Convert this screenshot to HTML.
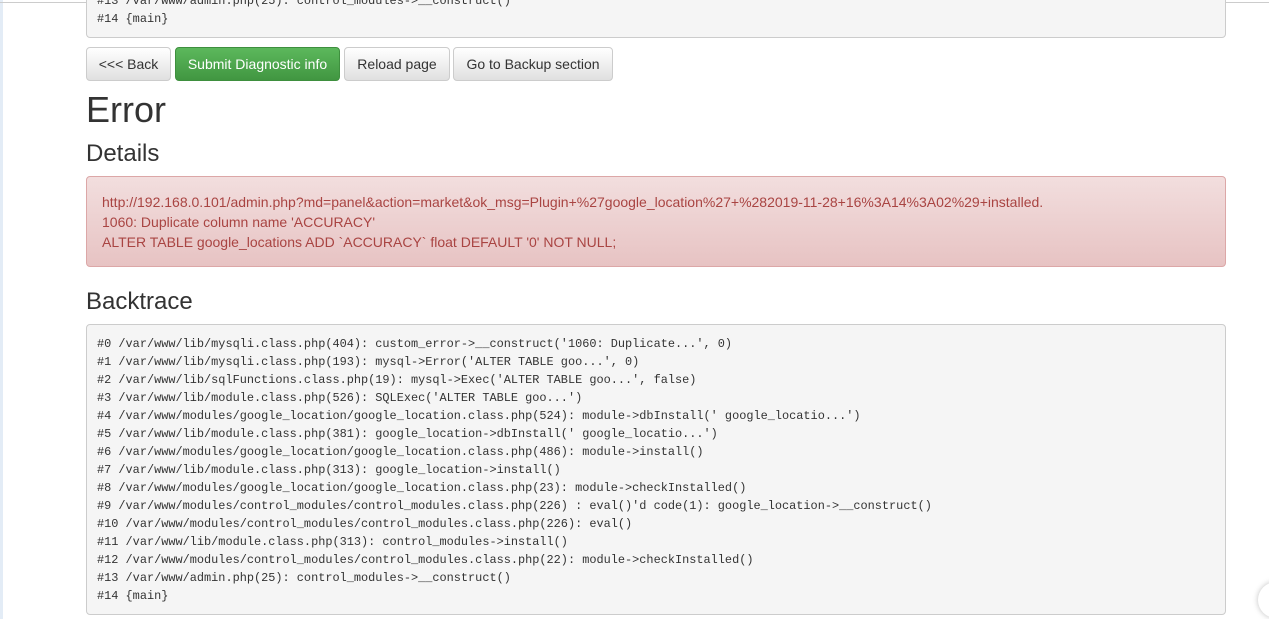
<!DOCTYPE html>
<html><head><meta charset="utf-8"><style>
body{margin:0;width:1269px;height:619px;overflow:hidden;background:#fff;font-family:"Liberation Sans",sans-serif;color:#333;position:relative}
.lstrip{position:absolute;left:0;top:0;width:3px;height:619px;background:#e3ecf6}
.topline{position:absolute;left:0;top:2px;width:1269px;height:1px;background:#ccc}
pre{font-family:"Liberation Mono",monospace;font-size:11.9px;line-height:18px;background:#f5f5f5;border:1px solid #ccc;border-radius:4px;margin:0;color:#333;position:absolute;left:86px;width:1118px;padding:0 10px;box-sizing:content-box}
.btn{position:absolute;top:47px;height:34px;box-sizing:border-box;border:1px solid #ccc;border-radius:4px;background:linear-gradient(#fff,#e0e0e0);font-size:14px;line-height:32px;text-align:center;color:#333}
.green{background:linear-gradient(#5cb85c,#419641);border-color:#3e8f3e;color:#fff}
h1{position:absolute;left:86px;top:90px;margin:0;font-size:36px;font-weight:normal;line-height:40px}
h3{position:absolute;left:86px;margin:0;font-size:24px;font-weight:normal;line-height:28px}
.alert{position:absolute;left:86px;top:176px;width:1140px;height:91px;box-sizing:border-box;border:1px solid #dca7a7;border-radius:4px;background:linear-gradient(#f2dede,#e7c3c3);color:#a94442;font-size:14px;line-height:20px;padding:15px 15px}
</style></head><body>
<div class="lstrip"></div><div class="topline"></div>
<pre style="top:-9px;height:45px;padding-top:0">#13 /var/www/admin.php(25): control_modules->__construct()
#14 {main}</pre>
<div class="btn" style="left:86px;width:85px">&lt;&lt;&lt; Back</div>
<div class="btn green" style="left:175px;width:165px">Submit Diagnostic info</div>
<div class="btn" style="left:344px;width:106px">Reload page</div>
<div class="btn" style="left:453px;width:160px">Go to Backup section</div>
<h1>Error</h1>
<h3 style="top:140px">Details</h3>
<div class="alert">http://192.168.0.101/admin.php?md=panel&amp;action=market&amp;ok_msg=Plugin+%27google_location%27+%282019-11-28+16%3A14%3A02%29+installed.<br>1060: Duplicate column name 'ACCURACY'<br>ALTER TABLE google_locations ADD `ACCURACY` float DEFAULT '0' NOT NULL;</div>
<h3 style="top:288px">Backtrace</h3>
<pre style="top:324px;height:270px;padding-top:10px;padding-bottom:9px">#0 /var/www/lib/mysqli.class.php(404): custom_error->__construct('1060: Duplicate...', 0)
#1 /var/www/lib/mysqli.class.php(193): mysql->Error('ALTER TABLE goo...', 0)
#2 /var/www/lib/sqlFunctions.class.php(19): mysql->Exec('ALTER TABLE goo...', false)
#3 /var/www/lib/module.class.php(526): SQLExec('ALTER TABLE goo...')
#4 /var/www/modules/google_location/google_location.class.php(524): module->dbInstall(' google_locatio...')
#5 /var/www/lib/module.class.php(381): google_location->dbInstall(' google_locatio...')
#6 /var/www/modules/google_location/google_location.class.php(486): module->install()
#7 /var/www/lib/module.class.php(313): google_location->install()
#8 /var/www/modules/google_location/google_location.class.php(23): module->checkInstalled()
#9 /var/www/modules/control_modules/control_modules.class.php(226) : eval()'d code(1): google_location->__construct()
#10 /var/www/modules/control_modules/control_modules.class.php(226): eval()
#11 /var/www/lib/module.class.php(313): control_modules->install()
#12 /var/www/modules/control_modules/control_modules.class.php(22): module->checkInstalled()
#13 /var/www/admin.php(25): control_modules->__construct()
#14 {main}</pre>
<div style="position:absolute;left:1258px;top:582px;width:36px;height:36px;border-radius:50%;background:#fff;box-shadow:0 0 6px rgba(0,0,0,.25)"></div>
</body></html>
